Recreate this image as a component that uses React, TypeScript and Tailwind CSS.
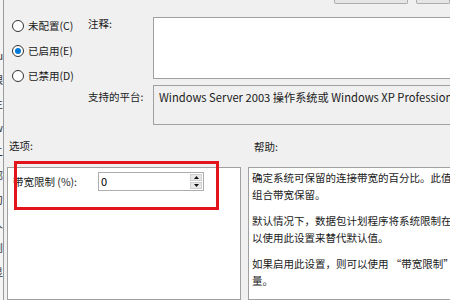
import React from 'react';

const cjk = "font-['Segoe_UI','Noto_Sans_CJK_SC',sans-serif]";

const Radio = ({ label, checked }: { label: string; checked?: boolean }) => (
  <div className="flex h-[18px] items-center gap-[4px]">
    <span className="flex h-[12px] w-[12px] items-center justify-center rounded-full border border-[#333] bg-white">
      {checked && <span className="h-[6px] w-[6px] rounded-full bg-[#0078d7]" />}
    </span>
    <span className="text-[10.5px] text-[#1a1a1a]">{label}</span>
  </div>
);

const SpinBox = ({ value }: { value: string }) => (
  <div className="flex h-[19px] w-[106px] items-center border border-[#adadad] bg-white">
    <span className="flex-1 pl-[2px] text-[11px] text-black">{value}</span>
    <div className="mr-[1px] flex flex-col gap-[1px]">
      <span className="flex h-[7px] w-[12px] items-center justify-center border border-[#cfcfcf] bg-[#e8e8e8]">
        <svg width="5" height="3" viewBox="0 0 5 3"><path d="M0 3 L2.5 0 L5 3 Z" fill="#111" /></svg>
      </span>
      <span className="flex h-[7px] w-[12px] items-center justify-center border border-[#cfcfcf] bg-[#e8e8e8]">
        <svg width="5" height="3" viewBox="0 0 5 3"><path d="M0 0 L2.5 3 L5 0 Z" fill="#111" /></svg>
      </span>
    </div>
  </div>
);

export default function App() {
  const help = [
    ['确定系统可保留的连接带宽的百分比。此值', '组合带宽保留。'],
    ['默认情况下，数据包计划程序将系统限制在', '以使用此设置来替代默认值。'],
    ['如果启用此设置，则可以使用 “带宽限制”', '量。'],
  ];

  return (
    <div className={`relative flex h-[300px] w-[450px] overflow-hidden bg-[#f0f0f0] ${cjk}`}>
      {/* sliver of the window behind */}
      <div className="flex w-[4px] shrink-0 flex-col items-end overflow-hidden border-r border-[#9a9a9a] bg-[#f4f4f4] pt-[44px] text-[10.5px] leading-[24px] text-[#333]">
        {['gu', '跟', '主', 'w', '二', '部', '刀', '人', '则', '显'].map((c, i) => (
          <span key={i} className="whitespace-nowrap">{c}</span>
        ))}
      </div>

      <div className="flex min-w-0 flex-1 flex-col">
        {/* top area */}
        <div className="flex h-[17px] items-start pl-[330px]">
          <div className="h-[4px] w-[88px] rounded-b-[2px] border-x border-b border-[#adadad] bg-[#e5e5e5]" />
          <div className="ml-[8px] h-[4px] w-[40px] rounded-b-[2px] border-x border-b border-[#adadad] bg-[#e5e5e5]" />
        </div>

        <div className="flex h-[108px]">
          <div className="flex w-[84px] shrink-0 flex-col gap-[7px] pl-[8px]">
            <Radio label="未配置(C)" />
            <Radio label="已启用(E)" checked />
            <Radio label="已禁用(D)" />
          </div>
          <div className="w-[65px] shrink-0 text-[10.5px] text-[#1a1a1a]">
            <div className="leading-[14px]">注释:</div>
            <div className="mt-[59px] leading-[14px]">支持的平台:</div>
          </div>
          <div className="flex min-w-0 flex-1 flex-col">
            <div className="h-[62px] w-[320px] border border-[#a0a0a0] bg-white" />
            <div className="mt-[6px] h-[40px] w-[320px] border border-[#a0a0a0] bg-[#f0f0f0] pl-[5px] pt-[3px] text-[11.2px] leading-[16px] whitespace-nowrap text-[#1a1a1a]">
              Windows Server 2003 操作系统或 Windows XP Professional with SP1
            </div>
          </div>
        </div>

        <div className="flex h-[43px] items-center text-[10.5px] text-[#1a1a1a]">
          <span className="pl-[5px]">选项:</span>
          <span className="ml-[221px] mt-[3px]">帮助:</span>
        </div>

        <div className="flex flex-1 gap-[7px] pl-[3px]">
          <div className="w-[234px] shrink-0 border border-[#a0a0a0] bg-white pl-[5px] pt-[4px]">
            <div className="flex items-center">
              <span className="w-[85px] text-[10.5px] text-[#1a1a1a]">带宽限制 (%):</span>
              <SpinBox value="0" />
            </div>
          </div>
          <div className="w-[260px] shrink-0 border border-[#a0a0a0] bg-white pl-[3px] pt-[2px] text-[10.5px] leading-[16.5px] text-[#1a1a1a]">
            {help.map((p, i) => (
              <div key={i} className="mb-[10px] whitespace-nowrap">
                {p.map((l, j) => (
                  <div key={j}>{l}</div>
                ))}
              </div>
            ))}
          </div>
        </div>
      </div>

      {/* red annotation */}
      <div className="pointer-events-none absolute left-[14px] top-[161px] h-[49px] w-[205px] border-[3px] border-[#e3141c]" />
    </div>
  );
}
